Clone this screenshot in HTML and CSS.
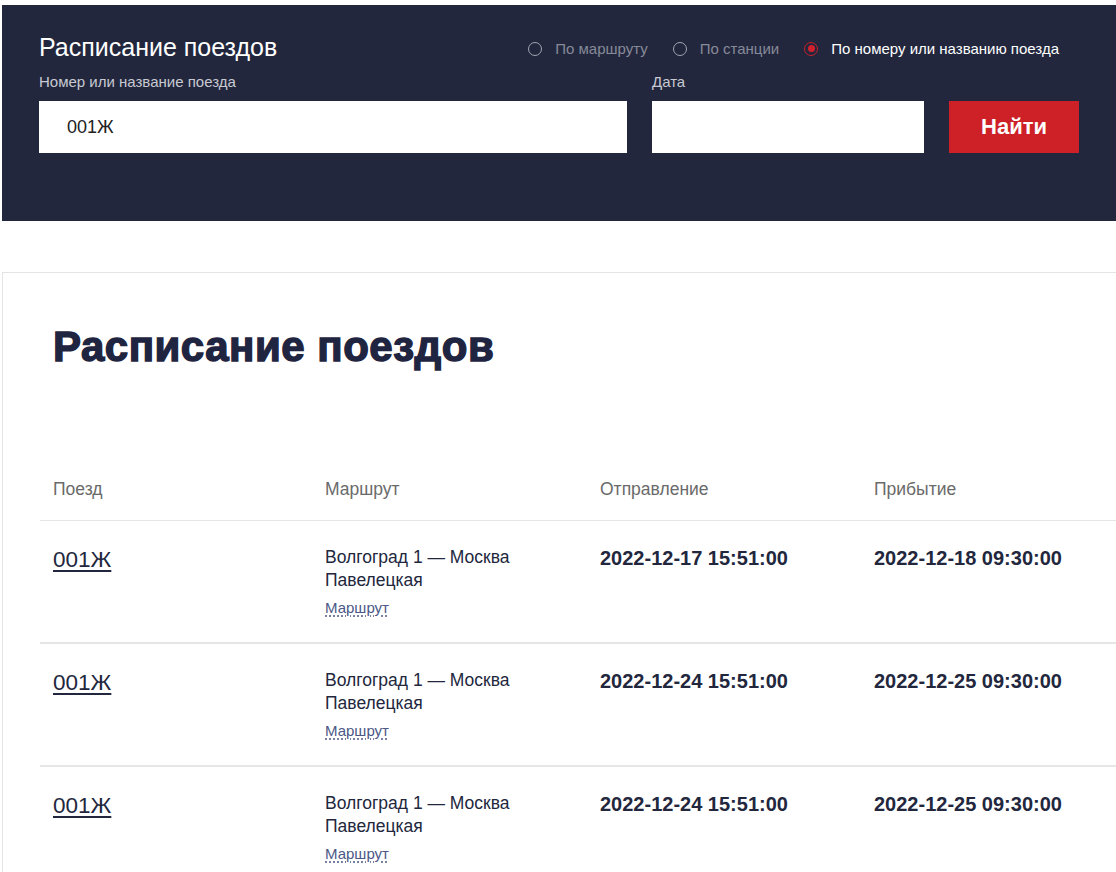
FILE: index.html
```html
<!DOCTYPE html>
<html lang="ru">
<head>
<meta charset="utf-8">
<title>Расписание поездов</title>
<link rel="stylesheet" href="styles.css">
</head>
<body>
<div class="page">
  <section class="search">
    <div class="search-top">
      <div class="search-title">Расписание поездов</div>
      <div class="modes">
        <label class="mode"><span class="radio"></span><span class="mode-text">По маршруту</span></label>
        <label class="mode"><span class="radio"></span><span class="mode-text">По станции</span></label>
        <label class="mode mode-active"><span class="radio radio-on"></span><span class="mode-text">По номеру или названию поезда</span></label>
      </div>
    </div>
    <div class="search-form">
      <div class="field field-train">
        <div class="field-label">Номер или название поезда</div>
        <input class="field-input" type="text" value="001Ж">
      </div>
      <div class="field field-date">
        <div class="field-label">Дата</div>
        <input class="field-input" type="text" value="">
      </div>
      <button class="btn-find" type="button">Найти</button>
    </div>
  </section>

  <section class="card">
    <h1 class="card-title">Расписание поездов</h1>
    <div class="table">
      <div class="row row-head">
        <div class="cell">Поезд</div>
        <div class="cell">Маршрут</div>
        <div class="cell">Отправление</div>
        <div class="cell">Прибытие</div>
      </div>
      <div class="row">
        <div class="cell"><a class="train" href="#">001Ж</a></div>
        <div class="cell route">
          <div class="route-name">Волгоград 1 — Москва Павелецкая</div>
          <a class="route-link" href="#">Маршрут</a>
        </div>
        <div class="cell time">2022-12-17 15:51:00</div>
        <div class="cell time">2022-12-18 09:30:00</div>
      </div>
      <div class="row">
        <div class="cell"><a class="train" href="#">001Ж</a></div>
        <div class="cell route">
          <div class="route-name">Волгоград 1 — Москва Павелецкая</div>
          <a class="route-link" href="#">Маршрут</a>
        </div>
        <div class="cell time">2022-12-24 15:51:00</div>
        <div class="cell time">2022-12-25 09:30:00</div>
      </div>
      <div class="row">
        <div class="cell"><a class="train" href="#">001Ж</a></div>
        <div class="cell route">
          <div class="route-name">Волгоград 1 — Москва Павелецкая</div>
          <a class="route-link" href="#">Маршрут</a>
        </div>
        <div class="cell time">2022-12-24 15:51:00</div>
        <div class="cell time">2022-12-25 09:30:00</div>
      </div>
    </div>
  </section>
</div>
</body>
</html>
```

FILE: styles.css
```css
html, body {
  margin: 0;
  padding: 0;
  background: #ffffff;
}
body {
  font-family: "Liberation Sans", Arial, sans-serif;
  color: #22273d;
  overflow: hidden;
}
.page {
  padding: 5px 0 0 2px;
}

/* search header */
.search {
  background: #22273e;
  padding: 28px 37px 68px 37px;
}
.search-top {
  display: flex;
  align-items: center;
  justify-content: space-between;
}
.search-title {
  color: #ffffff;
  font-size: 25px;
  line-height: 28px;
}
.modes {
  display: flex;
  align-items: center;
  gap: 25px;
  margin-right: 20px;
  padding-top: 3px;
}
.mode {
  display: flex;
  align-items: center;
  gap: 13px;
  font-size: 15px;
  line-height: 18px;
  color: #878a98;
}
.mode-active {
  color: #ffffff;
}
.radio {
  width: 12px;
  height: 12px;
  border: 1.5px solid #a3a5b0;
  border-radius: 50%;
  box-sizing: content-box;
  display: flex;
  align-items: center;
  justify-content: center;
}
.radio-on {
  border-color: #c8202a;
}
.radio-on::after {
  content: "";
  width: 7px;
  height: 7px;
  border-radius: 50%;
  background: #d3212b;
}

.search-form {
  display: flex;
  align-items: flex-end;
  gap: 25px;
  margin-top: 12px;
}
.field {
  display: flex;
  flex-direction: column;
  gap: 10px;
}
.field-train { width: 588px; }
.field-date { width: 272px; }
.field-label {
  color: #c9cad1;
  font-size: 15px;
  line-height: 18px;
}
.field-input {
  height: 52px;
  border: none;
  outline: none;
  margin: 0;
  padding: 0 28px;
  box-sizing: border-box;
  width: 100%;
  background: #ffffff;
  font-family: "Liberation Sans", Arial, sans-serif;
  font-size: 18px;
  color: #222222;
}
.btn-find {
  width: 130px;
  height: 52px;
  border: none;
  margin: 0;
  background: #cd2027;
  color: #ffffff;
  font-family: "Liberation Sans", Arial, sans-serif;
  font-size: 22px;
  font-weight: bold;
  cursor: pointer;
}

/* results card */
.card {
  margin-top: 51px;
  margin-right: -20px;
  border: 1px solid #e4e4e4;
  padding: 49px 0 0 37px;
  min-height: 700px;
}
.card-title {
  margin: 0 0 107px 0;
  padding-left: 13px;
  font-size: 42px;
  line-height: 50px;
  font-weight: bold;
  letter-spacing: 0.5px;
  color: #1f2540;
  -webkit-text-stroke: 1.4px #1f2540;
}
.table {
  width: 1120px;
}
.row {
  display: grid;
  grid-template-columns: 272px 275px 274px 1fr;
  border-bottom: 2px solid #e6e6e6;
  padding: 25px 0 24px 0;
}
.row-head {
  padding: 0 0 21px 0;
  border-bottom-width: 1px;
}
.cell {
  padding-left: 13px;
}
.row-head .cell {
  color: #6a6a6a;
  font-size: 17.5px;
  line-height: 20px;
}
.train {
  font-size: 22.5px;
  line-height: 28px;
  color: #22273d;
  text-decoration: underline;
  text-underline-offset: 3px;
}
.route-name {
  font-size: 17.5px;
  line-height: 23px;
  color: #22273d;
  width: 200px;
}
.route-link {
  display: inline-block;
  margin-top: 6px;
  font-size: 15px;
  line-height: 20px;
  color: #4c5886;
  text-decoration: underline dotted #4c5886;
  text-underline-offset: 3px;
}
.time {
  font-size: 20px;
  line-height: 24px;
  font-weight: bold;
  color: #22273d;
}
```
